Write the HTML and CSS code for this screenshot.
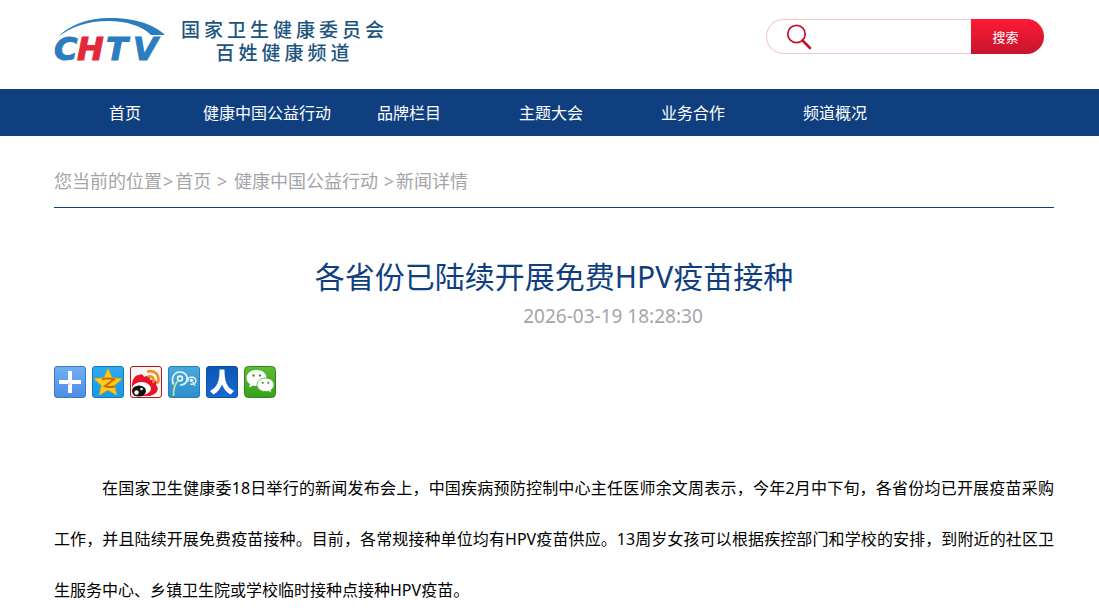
FILE: index.html
```html
<!DOCTYPE html>
<html lang="zh-CN">
<head>
<meta charset="utf-8">
<meta name="viewport" content="width=device-width, initial-scale=1">
<title>各省份已陆续开展免费HPV疫苗接种</title>
<link rel="stylesheet" href="styles.css">
</head>
<body>
<header class="header wrap">
  <a class="brand" href="#">
    <svg class="brand-mark" viewBox="0 0 114 46" role="img" aria-label="CHTV">
      <path d="M4 20C15 8 34 1 56 1c26 0 45 7 55 17H97C88 9 73 4 54 4 33 4 17 10 4 20z" fill="#2c7cc0"/>
      <text class="mark-text" x="0 23 52 79" y="43">C<tspan class="mark-red">H</tspan>TV</text>
    </svg>
    <span class="brand-name"><span>国家卫生健康委员会</span><span>百姓健康频道</span></span>
  </a>
  <form class="search" role="search">
    <label class="search-label" for="q" aria-label="搜索">
      <svg viewBox="0 0 26 26" width="26" height="26" fill="none" stroke="#c4122b"><circle cx="10.5" cy="10" r="8.7" stroke-width="1.7"/><path d="M16.5 16.5 24 24" stroke-width="2.6" stroke-linecap="round"/></svg>
    </label>
    <input class="search-input" id="q" type="text">
    <button class="search-button" type="submit">搜索</button>
  </form>
</header>
<nav class="nav">
  <div class="nav-list wrap">
    <a href="#">首页</a><a href="#">健康中国公益行动</a><a href="#">品牌栏目</a><a href="#">主题大会</a><a href="#">业务合作</a><a href="#">频道概况</a>
  </div>
</nav>
<main class="wrap">
  <div class="crumbs">您当前的位置<span class="sep">&gt;</span><a href="#">首页</a> <span class="sep">&gt;</span> <a href="#">健康中国公益行动</a> <span class="sep">&gt;</span>新闻详情</div>
  <h1 class="title">各省份已陆续开展免费HPV疫苗接种</h1>
  <time class="date" datetime="2026-03-19T18:28:30">2026-03-19 18:28:30</time>
  <div class="share">
    <a href="#" aria-label="更多分享">
      <svg viewBox="0 0 32 32"><defs><linearGradient id="g1" x2="0" y2="1"><stop stop-color="#72b0f5"/><stop offset="1" stop-color="#4b8de5"/></linearGradient></defs><rect x=".5" y=".5" width="31" height="31" rx="2.5" fill="url(#g1)" stroke="#3b76c0"/><path d="M14 5h4v9h9v4h-9v9h-4v-9H5v-4h9z" fill="#fff"/><path d="M14 18h2" stroke="#72a9ef"/></svg>
    </a>
    <a href="#" aria-label="QQ空间">
      <svg viewBox="0 0 32 32"><defs><linearGradient id="g2" x2="0" y2="1"><stop stop-color="#2ea9f2"/><stop offset="1" stop-color="#159be8"/></linearGradient></defs><rect x=".5" y=".5" width="31" height="31" rx="2.5" fill="url(#g2)" stroke="#1579b5"/><path d="M16 2.5l4.1 9.2 10 1-7.5 6.700 2.200 9.800L16 24.100l-8.800 5.100 2.200-9.800L1.900 12.700l10-1z" fill="#fdcb18" stroke="#ee9e12" stroke-width=".8" stroke-linejoin="round"/><path d="M10 13.200c4-1 8-1 12 0l-9 7c3 1 7 1 10 0" fill="none" stroke="#c86c08" stroke-width="2"/></svg>
    </a>
    <a href="#" aria-label="新浪微博">
      <svg viewBox="0 0 32 32"><rect x=".5" y=".5" width="31" height="31" rx="2.500" fill="#f7f5f3" stroke="#b5121b"/><path d="M2 19c0-5 3-10 7-10 2-2 5 0 5 2 3-2 7-1 6 3 6-1 8 2 6 5 4 4 1 9-6 11H4c-2-3-2-7-2-11z" fill="#e5142b"/><ellipse cx="11.500" cy="22.500" rx="9.500" ry="6.500" fill="#fff"/><ellipse cx="9" cy="25" rx="7" ry="5.500" fill="#111"/><circle cx="6.500" cy="26.500" r="2.200" fill="#fff"/><circle cx="11.500" cy="23" r="1.300" fill="#fff"/><path d="M18 5.500c7-2 12 4 10 11M18.500 10.500c4-.8 6 2 5 5.500" fill="none" stroke="#f58b1f" stroke-width="2.600" stroke-linecap="round"/></svg>
    </a>
    <a href="#" aria-label="腾讯微博">
      <svg viewBox="0 0 32 32"><defs><linearGradient id="g4" x2="0" y2="1"><stop stop-color="#4aa9dc"/><stop offset="1" stop-color="#2b8fca"/></linearGradient></defs><rect x=".5" y=".5" width="31" height="31" rx="2.500" fill="url(#g4)" stroke="#2881b5"/><path d="M5.500 18.500C3 13 5 7 11 6c5-.5 9 3 8 8-1 4-4 5-7 5" fill="none" stroke="#e9f7ff" stroke-width="1.600"/><circle cx="12" cy="12.500" r="2.400" fill="none" stroke="#f5fcff" stroke-width="1.600"/><path d="M10.500 14C7 18 5 23 5.500 30" fill="none" stroke="#c1e39b" stroke-width="1.800"/><path d="M20 16c-1-3 1-5 4-5 3 .2 4.500 3 3.500 5.500-1 2-3 2-5 1.500" fill="none" stroke="#e9f7ff" stroke-width="1.400"/><circle cx="23.500" cy="14.300" r="1.600" fill="#f5fcff"/><path d="M24.500 15.500l2.500 4.500" stroke="#d4edce" stroke-width="1.400"/></svg>
    </a>
    <a href="#" aria-label="人人网">
      <svg viewBox="0 0 32 32"><defs><linearGradient id="g5" x2="0" y2="1"><stop stop-color="#0b57b4"/><stop offset="1" stop-color="#1769d0"/></linearGradient></defs><rect x=".5" y=".5" width="31" height="31" rx="2.500" fill="url(#g5)" stroke="#0d50a4"/><path d="M13.500 3.500h5C18.500 14 20 21 28 25l-3.500 3.500C20 26 17.500 22 16 18.500 14.500 22 12 26 7.500 28.500L4 25C12 21 13.500 14 13.500 3.500z" fill="#fff"/></svg>
    </a>
    <a href="#" aria-label="微信">
      <svg viewBox="0 0 32 32"><defs><linearGradient id="g6" x2="0" y2="1"><stop stop-color="#5cbd35"/><stop offset="1" stop-color="#35a21a"/></linearGradient></defs><rect x=".5" y=".5" width="31" height="31" rx="4" fill="url(#g6)" stroke="#2b8a18"/><path d="M12.500 4C6.500 4 2.500 7.700 2.500 12c0 2.500 1.500 4.700 3.500 6.200L5 21.500l4-2c1.200.3 2.300.5 3.500.5 6 0 10-3.500 10-8s-4-8-10-8z" fill="#fff"/><circle cx="9.500" cy="9.500" r="1.200" fill="#3c9b22"/><circle cx="16" cy="9.500" r="1.200" fill="#3c9b22"/><path d="M21.500 12c-5 0-8.500 3-8.500 6.800s3.500 6.800 8.500 6.800c1 0 2-.1 3-.4l3.300 1.800-.9-2.900c2-1.300 3.100-3.200 3.100-5.300 0-3.800-3.500-6.800-8.500-6.800z" fill="#fff" stroke="#43a726" stroke-width=".8"/><circle cx="18.700" cy="16.800" r="1.100" fill="#3c9b22"/><circle cx="24.300" cy="16.800" r="1.100" fill="#3c9b22"/></svg>
    </a>
  </div>
  <article class="article">
    <p>在国家卫生健康委18日举行的新闻发布会上，中国疾病预防控制中心主任医师余文周表示，今年2月中下旬，各省份均已开展疫苗采购工作，并且陆续开展免费疫苗接种。目前，各常规接种单位均有HPV疫苗供应。13周岁女孩可以根据疾控部门和学校的安排，到附近的社区卫生服务中心、乡镇卫生院或学校临时接种点接种HPV疫苗。</p>
  </article>
</main>
</body>
</html>
```

FILE: styles.css
```css
* { box-sizing: border-box; }

body {
  margin: 0;
  background: #fff;
  color: #000;
  font-family: "Noto Sans", "Noto Sans CJK SC", sans-serif;
  font-size: 16px;
  text-spacing-trim: space-all;
}

a { color: inherit; text-decoration: none; }

.wrap { padding: 0 45px 0 54px; }

.header {
  display: flex;
  justify-content: space-between;
  align-items: flex-start;
  height: 89px;
}

.brand { display: flex; gap: 13px; padding-top: 17px; }
.brand-mark { width: 114px; height: 46px; overflow: visible; }
.mark-text {
  font-family: "DejaVu Sans", sans-serif;
  font-size: 32px;
  font-weight: bold;
  font-style: italic;
  fill: #2c7cc0;
  stroke: #2c7cc0;
  stroke-width: 1px;
}
.mark-red { fill: #e62739; stroke: #e62739; }

.brand-name {
  display: flex;
  flex-direction: column;
  color: #1b557f;
  font-family: "Noto Sans CJK SC", sans-serif;
  font-size: 19px;
  font-weight: 500;
  line-height: 23px;
  letter-spacing: 4px;
  text-align: center;
}

.search {
  display: flex;
  width: 278px;
  height: 35px;
  margin: 19px 10px 0 0;
  border: 1px solid #f8c5cb;
  border-right: 0;
  border-radius: 18px;
}
.search-label { padding: 4px 0 0 19px; }
.search-input {
  flex: 1;
  min-width: 0;
  border: 0;
  outline: 0;
  background: transparent;
  font-size: 14px;
}
.search-button {
  width: 73px;
  margin: -1px 0;
  padding: 0 4px 0 0;
  border: 0;
  border-radius: 0 18px 18px 0;
  background: linear-gradient(#ff1935, #c4162e);
  color: #fff;
  font-family: "Noto Sans CJK SC", sans-serif;
  font-size: 13px;
}

.nav { background: #103f80; color: #fff; }
.nav-list { display: flex; }
.nav-list a {
  width: 142px;
  padding-top: 1px;
  line-height: 46px;
  text-align: center;
  white-space: nowrap;
}

.crumbs {
  padding: 31px 0 12px;
  border-bottom: 1px solid #103f80;
  color: #a5a5a9;
  font-size: 18px;
  line-height: 28px;
}
.sep { padding: 0 2px 0 1px; }

.title {
  margin: 49px 0 0;
  color: #103f80;
  font-size: 30px;
  font-weight: 400;
  line-height: 40px;
  text-align: center;
}
.date {
  display: block;
  padding-left: 118px;
  color: #a5a5a9;
  font-size: 19px;
  line-height: 38px;
  text-align: center;
}

.share { display: flex; gap: 6px; margin-top: 31px; }
.share a, .share svg { display: block; width: 32px; height: 32px; }

.article { padding-top: 65px; }
.article p {
  margin: 0;
  line-height: 51px;
  text-align: justify;
  text-indent: 48px;
}
```
